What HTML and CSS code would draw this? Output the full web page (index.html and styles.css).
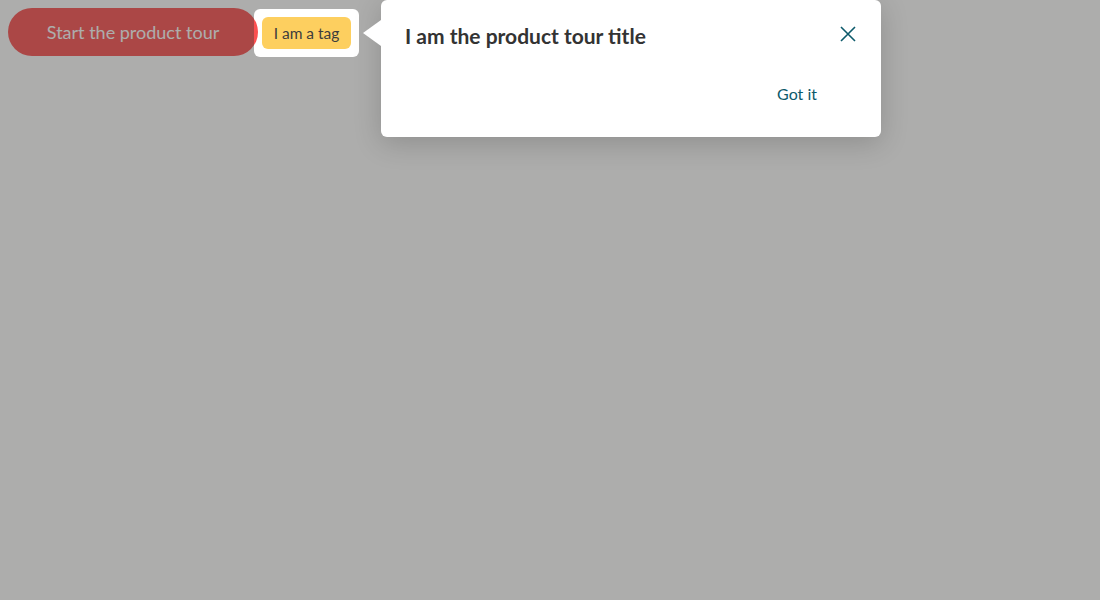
FILE: index.html
```html
<!DOCTYPE html>
<html>
<head>
<meta charset="utf-8">
<link rel="stylesheet" href="styles.css">
</head>
<body>
<div class="page">
  <button class="tour-btn">Start the product tour</button>
  <span class="tag">I am a tag</span>
</div>
<div class="spotlight"></div>
<div class="popover">
  <div class="arrow"></div>
  <div class="pop-head">
    <h2 class="pop-title">I am the product tour title</h2>
    <button class="close" aria-label="Close">
      <svg width="16" height="16" viewBox="0 0 16 16"><path d="M1 1L15 15M15 1L1 15" stroke="#0d5a6b" stroke-width="1.6" fill="none"/></svg>
    </button>
  </div>
  <div class="pop-foot">
    <button class="got">Got it</button>
  </div>
</div>
</body>
</html>
```
FILE: styles.css
```css
html, body { margin: 0; padding: 0; background: #fff; }
body { width: 1100px; height: 600px; overflow: hidden; font-family: "Lato", "Liberation Sans", sans-serif; }
.page { display: flex; align-items: center; gap: 4px; padding: 8px; }
.tour-btn {
  width: 250px; height: 48px; border: none; border-radius: 24px;
  background: #fb5050; color: #fff; font-family: inherit; font-size: 18px;
  padding: 0;
}
.tag {
  display: inline-flex; align-items: center; justify-content: center;
  width: 89px; height: 32px; padding: 0;
  background: #fdcf5f; color: #3d3d3d; border-radius: 6px; font-size: 15.5px;
  margin-top: 2px;
}
.spotlight {
  position: absolute; left: 254px; top: 9px; width: 105px; height: 48px;
  border-radius: 6px; box-shadow: 0 0 0 2000px rgba(60,60,58,0.42);
}
.popover {
  position: absolute; left: 381px; top: 0; width: 500px; height: 137px;
  box-sizing: border-box; background: #fff; border-radius: 6px;
  box-shadow: 0 6px 28px rgba(0,0,0,0.18);
  padding: 22px 24px 0 24px;
}
.arrow {
  position: absolute; left: -18px; top: 20px; width: 0; height: 0;
  border-top: 13px solid transparent; border-bottom: 13px solid transparent;
  border-right: 18px solid #fff;
}
.pop-head { display: flex; justify-content: space-between; align-items: flex-start; }
.pop-title { margin: 0; font-size: 21px; font-weight: 700; color: #333; line-height: 28px; }
.close { border: none; background: none; padding: 0; margin-top: 4px; margin-right: 1px; width: 16px; height: 16px; display: flex; }
.pop-foot { display: flex; justify-content: flex-end; margin-top: 33px; padding-right: 40px; }
.got { border: none; background: none; padding: 0; font-family: inherit; font-size: 16px; color: #0d5a6b; line-height: 22px; }
```
